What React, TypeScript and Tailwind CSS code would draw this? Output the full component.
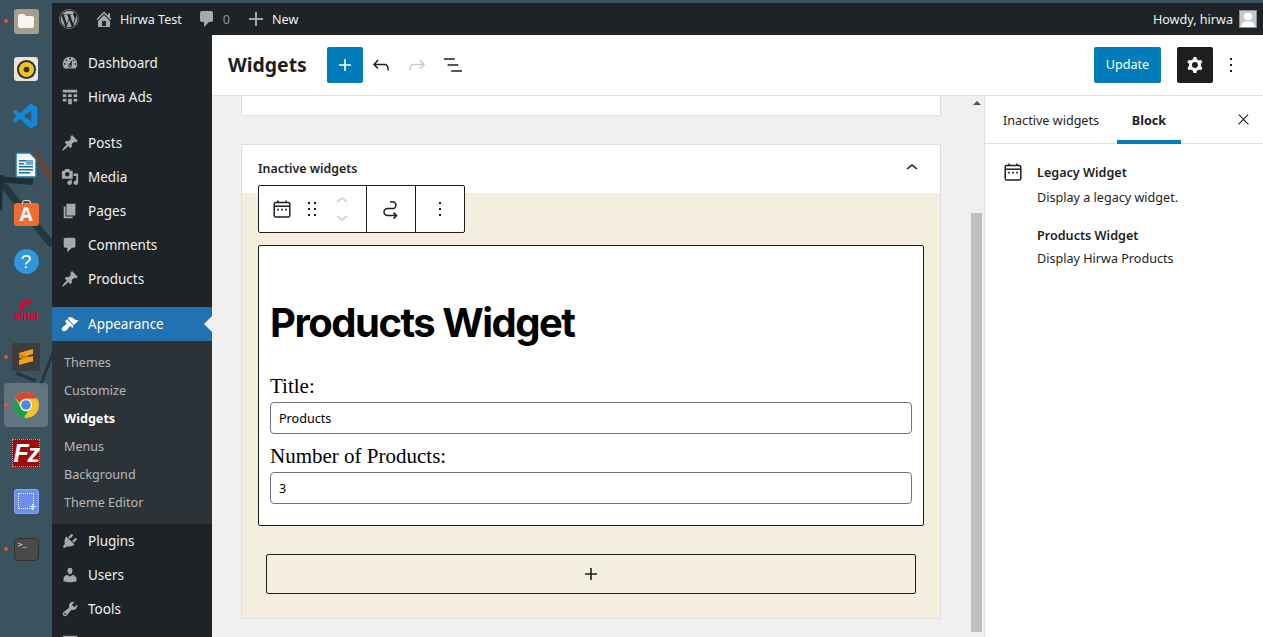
import { FaWordpress } from "react-icons/fa";
import { VscVscode } from "react-icons/vsc";

const D = {
  dashboard:
    "M3.76 16h12.48c1.1-1.37 1.76-3.11 1.76-5 0-4.42-3.58-8-8-8s-8 3.58-8 8c0 1.89.66 3.63 1.76 5zM10 4c.55 0 1 .45 1 1s-.45 1-1 1-1-.45-1-1 .45-1 1-1zM6 6c.55 0 1 .45 1 1s-.45 1-1 1-1-.45-1-1 .45-1 1-1zm8 0c.55 0 1 .45 1 1s-.45 1-1 1-1-.45-1-1 .45-1 1-1zm-5.37 5.55L12 7v6c0 1.1-.9 2-2 2s-2-.9-2-2c0-.57.24-1.08.63-1.45zM4 10c.55 0 1 .45 1 1s-.45 1-1 1-1-.45-1-1 .45-1 1-1zm12 0c.55 0 1 .45 1 1s-.45 1-1 1-1-.45-1-1 .45-1 1-1zm-5 3c0-.55-.45-1-1-1s-1 .45-1 1 .45 1 1 1 1-.45 1-1z",
  table: "M2 2h16v3H2zM2 7h4v3H2zM8 7h4v3H8zM14 7h4v3h-4zM2 12h4v3H2zM8 12h4v6H8zM14 12h4v3h-4z",
  pin: "M10.44 3.02l1.82-1.82 6.36 6.35-1.83 1.82c-1.05-.68-2.48-.57-3.41.36l-.75.75c-.92.93-1.04 2.35-.35 3.41l-1.83 1.82-2.41-2.41-2.8 2.79c-.42.42-3.38 2.71-3.8 2.29s1.86-3.39 2.28-3.81l2.79-2.79L4.1 9.36l1.83-1.82c1.05.69 2.48.57 3.4-.36l.75-.75c.93-.92 1.05-2.35.36-3.41z",
  media:
    "M13 11V4c0-.55-.45-1-1-1h-1.67L9 1H5L3.67 3H2c-.55 0-1 .45-1 1v7c0 .55.45 1 1 1h10c.55 0 1-.45 1-1zM7 4.5c1.38 0 2.5 1.12 2.5 2.5S8.38 9.5 7 9.5 4.5 8.38 4.5 7 5.62 4.5 7 4.5zM14 6h5v10.5c0 1.38-1.12 2.5-2.5 2.5S14 17.88 14 16.5s1.12-2.5 2.5-2.5c.17 0 .34.02.5.05V9h-3V6zm-4 8.05V13h2v3.5c0 1.38-1.12 2.5-2.5 2.5S7 17.88 7 16.5 8.12 14 9.5 14c.17 0 .34.02.5.05z",
  page: "M6 15V2h10v13H6zm-1 1h8v2H3V5h2v11z",
  comment: "M5 2h9c1.1 0 2 .9 2 2v7c0 1.1-.9 2-2 2h-2l-5 5v-5H5c-1.1 0-2-.9-2-2V4c0-1.1.9-2 2-2z",
  brush:
    "M14.48 11.06L7.41 3.99l1.5-1.5c.5-.56 2.3-.47 3.51.32 1.21.8 1.43 1.28 2.91 2.1 1.18.64 2.45 1.26 4.45.85zm-.71.71L6.7 4.7 4.93 6.47c-.39.39-.39 1.02 0 1.41l1.06 1.06c.39.39.39 1.03 0 1.42-.6.6-1.43 1.11-2.21 1.69-.35.26-.7.53-1.01.84C1.43 13.23.1 15.8 1.6 17.3s4.07.17 5.4-1.17c.31-.31.58-.66.84-1.01.58-.78 1.09-1.61 1.69-2.21.39-.39 1.03-.39 1.42 0l1.06 1.06c.39.39 1.02.39 1.41 0z",
  plugin:
    "M13.11 4.36L9.87 7.6 8 5.73l3.24-3.24c.35-.34 1.05-.2 1.56.32.52.51.66 1.21.31 1.55zm-8 1.77l.91-1.12 9.01 9.01-1.19.84c-.71.71-2.63 1.16-3.82 1.16H6.14L4.9 17.26c-.59.59-1.54.59-2.12 0-.59-.58-.59-1.53 0-2.12l1.24-1.24v-3.88c0-1.13.4-3.19 1.09-3.89zm7.26 3.97l3.24-3.24c.34-.35 1.04-.21 1.55.31.52.51.66 1.21.31 1.55l-3.24 3.25z",
  users:
    "M10 9.25c-2.27 0-2.73-3.44-2.73-3.44C7 4.02 7.82 2 9.97 2c2.16 0 2.98 2.02 2.71 3.81 0 0-.41 3.44-2.68 3.44zm0 2.57L12.72 10c2.39 0 4.52 2.33 4.52 4.53v2.49s-3.65 1.13-7.24 1.13c-3.65 0-7.24-1.13-7.24-1.13v-2.49c0-2.25 1.94-4.48 4.47-4.48z",
  tools:
    "M16.68 9.77c-1.34 1.34-3.3 1.67-4.95.99l-5.41 6.52c-.99.99-2.59.99-3.58 0s-.99-2.59 0-3.57l6.52-5.42c-.68-1.65-.35-3.61.99-4.95 1.28-1.28 3.12-1.62 4.72-1.06l-2.89 2.89 2.82 2.82 2.86-2.87c.53 1.58.18 3.39-1.08 4.67zM3.81 16.21c.4.39 1.04.39 1.43 0 .4-.4.4-1.04 0-1.43-.39-.4-1.03-.4-1.43 0-.39.39-.39 1.03 0 1.43z",
  home: "M16 8.5l1.53 1.53-1.06 1.06L10 4.62l-6.47 6.47-1.06-1.06L10 2.5l4 4v-2h2v4zm-6-2.46l6 5.99V18H4v-5.97zM12 17v-5H8v5h4z",
  plusBar: "M17 9v2h-6v6H9v-6H3V9h6V3h2v6h6z",
  settings: "M2 2h16v16H2z",
};

const G = {
  plus: "M18 11.2h-5.2V6h-1.6v5.2H6v1.6h5.2V18h1.6v-5.2H18z",
  undo: "M18.3 11.7c-.6-.6-1.4-.9-2.3-.9H6.7l2.9-3.3-1.1-1-4.5 5L8.5 16l1-1-2.7-2.7H16c.5 0 .9.2 1.3.5 1 1 1 3.4 1 4.5v.3h1.5v-.2c0-1.5 0-4.3-1.5-5.7z",
  redo: "M15.6 6.5l-1.1 1 2.9 3.3H8c-.9 0-1.7.3-2.3.9-1.4 1.5-1.4 4.2-1.4 5.6v.2h1.5v-.3c0-1.1 0-3.5 1-4.5.3-.3.7-.5 1.3-.5h9.2L14.5 15l1.1 1.1 4.6-4.6-4.6-5z",
  list: "M13.8 5.2H3v1.5h10.8V5.2zm-3.6 12v1.5H21v-1.5H10.2zm7.2-6H6.6v1.5h10.8v-1.5z",
  cog: "M10.289 4.836A1 1 0 0111.275 4h1.306a1 1 0 01.987.836l.244 1.466c.787.26 1.503.679 2.108 1.218l1.393-.522a1 1 0 011.216.437l.653 1.13a1 1 0 01-.23 1.273l-1.148.944a6.025 6.025 0 010 2.435l1.149.946a1 1 0 01.23 1.272l-.653 1.13a1 1 0 01-1.216.437l-1.394-.522c-.605.54-1.32.958-2.108 1.218l-.244 1.466a1 1 0 01-.987.836h-1.306a1 1 0 01-.986-.836l-.244-1.466a5.995 5.995 0 01-2.108-1.218l-1.394.522a1 1 0 01-1.217-.436l-.653-1.131a1 1 0 01.23-1.272l1.149-.946a6.026 6.026 0 010-2.435l-1.148-.944a1 1 0 01-.23-1.272l.653-1.131a1 1 0 011.217-.437l1.393.522a5.994 5.994 0 012.108-1.218l.244-1.466zM14.929 12a3 3 0 11-6 0 3 3 0 016 0z",
  more: "M13 19h-2v-2h2v2zm0-6h-2v-2h2v2zm0-6h-2V5h2v2z",
  drag: "M8 7h2V5H8v2zm0 6h2v-2H8v2zm0 6h2v-2H8v2zm6-14v2h2V5h-2zm0 8h2v-2h-2v2zm0 6h2v-2h-2v2z",
  up: "M6.5 12.4L12 8l5.5 4.4-.9 1.2L12 10l-4.5 3.6-1-1.2z",
  down: "M17.5 11.6L12 16l-5.5-4.4.9-1.2L12 14l4.5-3.6 1 1.2z",
  close: "M13 11.8l6.1-6.3-1-1-6.1 6.2-6.1-6.2-1 1 6.1 6.3-6.5 6.7 1 1 6.5-6.6 6.5 6.6 1-1z",
};

const Dash = ({ d, className }: { d: string; className?: string }) => (
  <svg viewBox="0 0 20 20" className={className} fill="currentColor">
    <path d={d} />
  </svg>
);

const Gb = ({ d, className }: { d: string; className?: string }) => (
  <svg viewBox="0 0 24 24" className={className} fill="currentColor">
    <path d={d} fillRule="evenodd" />
  </svg>
);

const CalendarIcon = ({ className }: { className?: string }) => (
  <svg viewBox="0 0 18 18" className={className} fill="none" stroke="#1e1e1e" strokeWidth="1.5">
    <rect x="1.2" y="2.6" width="15.6" height="14.4" rx="1.6" />
    <path d="M1.2 6.2h15.6" />
    <path d="M5 .6v2.4M13 .6v2.4" />
    <path d="M4.2 9.6h1.7M8.2 9.6h1.7M12.2 9.6h1.7" strokeWidth="1.6" />
  </svg>
);

const menuTop = [
  { label: "Dashboard", icon: D.dashboard },
  { label: "Hirwa Ads", icon: D.table },
];
const menuMid = [
  { label: "Posts", icon: D.pin },
  { label: "Media", icon: D.media },
  { label: "Pages", icon: D.page },
  { label: "Comments", icon: D.comment },
  { label: "Products", icon: D.pin },
];
const menuBottom = [
  { label: "Plugins", icon: D.plugin },
  { label: "Users", icon: D.users },
  { label: "Tools", icon: D.tools },
];
const subMenu = ["Themes", "Customize", "Widgets", "Menus", "Background", "Theme Editor"];

const MenuItem = ({ label, icon }: { label: string; icon: string }) => (
  <div className="flex h-[34px] shrink-0 items-center text-[13.5px] text-[#f0f0f1]">
    <Dash d={icon} className="mx-[9px] size-[18px] text-[#a7aaad]" />
    <span>{label}</span>
  </div>
);

const Sidebar = () => (
  <nav className="flex w-[160px] shrink-0 flex-col overflow-hidden bg-[#1d2327] pt-[11px]">
    {menuTop.map((m) => (
      <MenuItem key={m.label} {...m} />
    ))}
    <div className="h-[12px] shrink-0" />
    {menuMid.map((m) => (
      <MenuItem key={m.label} {...m} />
    ))}
    <div className="h-[11px] shrink-0" />
    <div className="relative flex h-[34px] shrink-0 items-center bg-[#2271b1] text-[13.5px] text-white">
      <Dash d={D.brush} className="mx-[9px] size-[18px] text-white" />
      <span>Appearance</span>
      <span className="absolute right-0 top-[9px] size-0 border-y-[8px] border-r-[8px] border-y-transparent border-r-[#f0f0f0]" />
    </div>
    <div className="shrink-0 bg-[#2c3338] pb-[7px] pt-[8px]">
      {subMenu.map((s) => (
        <div
          key={s}
          className={
            s === "Widgets"
              ? "flex h-[28px] items-center pl-[12px] text-[12.6px] font-bold text-white"
              : "flex h-[28px] items-center pl-[12px] text-[12.6px] text-[#f0f0f1]/70"
          }
        >
          {s}
        </div>
      ))}
    </div>
    {menuBottom.map((m) => (
      <MenuItem key={m.label} {...m} />
    ))}
    <Dash d={D.settings} className="ml-[9px] mt-[8px] size-[18px] shrink-0 text-[#a7aaad]" />
  </nav>
);

const AdminBar = () => (
  <header className="flex h-[32px] shrink-0 items-center bg-[#1d2327] text-[12.6px] text-[#f0f0f1]">
    <FaWordpress className="ml-[7px] size-[20px] text-[#a7aaad]" />
    <Dash d={D.home} className="ml-[15px] size-[20px] text-[#a7aaad]" />
    <span className="ml-[6px] pt-[2px]">Hirwa Test</span>
    <Dash d={D.comment} className="ml-[15px] size-[20px] text-[#a7aaad]" />
    <span className="ml-[6px] pt-[2px] text-[#8c8f94]">0</span>
    <Dash d={D.plusBar} className="ml-[16px] size-[20px] text-[#a7aaad]" />
    <span className="ml-[6px] pt-[2px]">New</span>
    <span className="ml-auto pt-[2px]">Howdy, hirwa</span>
    <div className="mx-[6px] flex size-[18px] flex-col items-center overflow-hidden border border-[#8c8f94] bg-[#c9c9c9]">
      <span className="mt-[2px] size-[8px] rounded-full bg-white" />
      <span className="mt-[1px] h-[8px] w-[14px] rounded-t-full bg-white" />
    </div>
  </header>
);

const EditorHeader = () => (
  <div className="flex h-[61px] shrink-0 items-center border-b border-[#e0e0e0] bg-white pb-[1px] text-[#1e1e1e]">
    <h1 className="ml-[16px] w-[99px] text-[19.4px] font-bold leading-none">Widgets</h1>
    <button className="flex size-[36px] items-center justify-center rounded-[2px] bg-[#007cba] text-white">
      <Gb d={G.plus} className="size-6" />
    </button>
    <Gb d={G.undo} className="ml-[6px] size-6" />
    <Gb d={G.redo} className="ml-[12px] size-6 text-[#cccccc]" />
    <Gb d={G.list} className="ml-[12px] size-6" />
    <button className="ml-auto flex h-[36px] w-[67px] items-center justify-center rounded-[2px] bg-[#007cba] pt-[2px] text-[12.6px] text-white">
      Update
    </button>
    <button className="ml-[16px] flex size-[36px] items-center justify-center rounded-[2px] bg-[#1e1e1e] text-white">
      <Gb d={G.cog} className="size-6" />
    </button>
    <Gb d={G.more} className="ml-[6px] mr-[20px] size-6" />
  </div>
);

const Field = ({ label, value }: { label: string; value: string }) => (
  <div className="flex flex-col">
    <label className="font-['Liberation_Serif',serif] text-[21px] leading-[24px] text-black">{label}</label>
    <div className="mt-[4px] flex h-[32px] items-center rounded-[4px] border border-[#757575] bg-white pl-[8px] pt-[2px] text-[12.6px] text-black">
      {value}
    </div>
  </div>
);

const Toolbar = () => (
  <div className="absolute left-[16px] top-[40px] flex h-[48px] w-[207px] items-center rounded-[2px] border border-[#1e1e1e] bg-white text-[#1e1e1e]">
    <div className="flex h-full w-[108px] items-center border-r border-[#1e1e1e] pl-[14px]">
      <CalendarIcon className="size-[18px]" />
      <Gb d={G.drag} className="ml-[9px] size-6" />
      <div className="ml-[6px] -mt-[1px] flex flex-col text-[#cccccc]">
        <Gb d={G.up} className="-mb-[8px] size-6" />
        <Gb d={G.down} className="size-6" />
      </div>
    </div>
    <div className="flex h-full w-[49px] items-center justify-center border-r border-[#1e1e1e]">
      <svg viewBox="0 0 24 24" className="size-6" fill="none" stroke="#1e1e1e" strokeWidth="1.5">
        <path d="M11 4.800h2.500a3.400 3.400 0 0 1 0 6.800H8.500a3.500 3.500 0 0 0 0 7h9" />
        <path d="M14.500 15.600l3 3-3 3" />
      </svg>
    </div>
    <div className="flex h-full flex-1 items-center justify-center">
      <Gb d={G.more} className="size-6" />
    </div>
  </div>
);

const Canvas = () => (
  <div className="min-w-0 flex-1 overflow-hidden bg-[#f0f0f0] pl-[29px]">
    <div className="h-[20px] w-[700px] border-x border-b border-[#e0e0e0] bg-white" />
    <section className="relative mt-[28px] w-[700px] border border-[#e0e0e0] bg-white">
      <div className="flex h-[48px] items-center justify-between px-[16px] text-[12.4px] font-semibold text-[#1e1e1e]">
        <span>Inactive widgets</span>
        <Gb d={G.up} className="-mt-[2px] size-6" />
      </div>
      <div className="bg-[#f4eedf] pb-[24px] pl-[16px] pr-[16px] pt-[52px]">
        <div className="flex h-[281px] flex-col rounded-[2px] border border-[#1e1e1e] bg-white px-[11px]">
          <h2 className="mt-[52px] font-['Inter',sans-serif] text-[40px] font-bold leading-[50px] tracking-[-1.5px] text-black">
            Products Widget
          </h2>
          <div className="mt-[26px] flex flex-col gap-[10px]">
            <Field label="Title:" value="Products" />
            <Field label="Number of Products:" value="3" />
          </div>
        </div>
        <button className="ml-[8px] mt-[28px] flex h-[40px] w-[650px] items-center justify-center rounded-[2px] border border-[#1e1e1e] text-[#1e1e1e]">
          <Gb d={G.plus} className="size-6" />
        </button>
      </div>
      <Toolbar />
    </section>
  </div>
);

const Scrollbar = () => (
  <div className="flex w-[13px] shrink-0 flex-col bg-[#f0f0f0]">
    <span className="ml-[2px] mt-[5px] size-0 border-x-[4px] border-b-[4px] border-x-transparent border-b-[#505050]" />
    <div className="mt-[108px] h-[419px] w-[11px] bg-[#c0c0c0]" />
  </div>
);

const Inspector = () => (
  <aside className="w-[279px] shrink-0 border-l border-[#e0e0e0] bg-white text-[12.6px] text-[#1e1e1e]">
    <div className="flex h-[48px] border-b border-[#e0e0e0]">
      <div className="flex w-[132px] items-center pl-[18px] pt-[3px]">Inactive widgets</div>
      <div className="-mb-[1px] flex w-[64px] items-center justify-center border-b-4 border-[#007cba] pt-[6px] font-bold">
        Block
      </div>
      <Gb d={G.close} className="ml-[54px] mt-[15px] size-[17px]" />
    </div>
    <div className="flex pl-[19px] pt-[20px]">
      <CalendarIcon className="-mt-[1px] size-[18px]" />
      <div className="ml-[15px] flex flex-col">
        <strong className="font-semibold leading-[18px]">Legacy Widget</strong>
        <p className="mt-[7px] leading-[18px]">Display a legacy widget.</p>
        <strong className="mt-[20px] font-semibold leading-[18px]">Products Widget</strong>
        <p className="mt-[5px] leading-[18px]">Display Hirwa Products</p>
      </div>
    </div>
  </aside>
);

const DockIcon = ({ children, dot, active }: { children: React.ReactNode; dot?: boolean; active?: boolean }) => (
  <div className="relative flex h-[48px] w-[52px] shrink-0 items-center justify-center">
    {active && <span className="absolute left-[4px] top-[2px] size-[44px] rounded-[4px] bg-white/20" />}
    {dot && <span className="absolute left-[4px] top-[22px] size-[4px] rounded-full bg-[#e95420]" />}
    <div className="relative flex size-[26px] items-center justify-center">{children}</div>
  </div>
);

const Dock = () => (
  <div className="relative flex h-full w-[52px] shrink-0 flex-col overflow-hidden bg-[#3b525f]">
    <svg viewBox="0 0 52 637" className="absolute left-0 top-0 h-[637px] w-[52px]" fill="none">
      <path d="M-4 176 52 245" stroke="#243640" strokeWidth="7" />
      <path d="M-4 179 33 182" stroke="#1f2f38" strokeWidth="6" />
      <path d="M1 175 0 210" stroke="#1f2f38" strokeWidth="4" />
      <path d="M34 152 54 182" stroke="#6a4430" strokeWidth="5" />
      <path d="M16 373 36 381" stroke="#243640" strokeWidth="3" />
      <path d="M41 384 54 350" stroke="#243640" strokeWidth="3" />
    </svg>
    <div className="relative -mt-[3px] flex flex-col">
      <DockIcon dot>
        <div className="flex size-[25px] shrink-0 items-center justify-center rounded-[3px] bg-[#a59e8d]">
          <svg viewBox="0 0 18 16" className="w-[18px]">
            <path d="M1 3a2 2 0 0 1 2-2h4l2 2h6a2 2 0 0 1 2 2v8a2 2 0 0 1-2 2H3a2 2 0 0 1-2-2z" fill="#f7f5f0" />
          </svg>
        </div>
      </DockIcon>
      <DockIcon>
        <div className="flex size-[24px] shrink-0 items-center justify-center rounded-[3px] bg-[#e8e4da]">
          <svg viewBox="0 0 20 20" className="size-[19px]">
            <circle cx="10" cy="10" r="10" fill="#2a2a2a" />
            <circle cx="10" cy="10" r="8" fill="#f0c419" />
            <circle cx="10" cy="10" r="3" fill="#333333" />
          </svg>
        </div>
      </DockIcon>
      <DockIcon>
        <VscVscode className="size-[30px] shrink-0 text-[#1187d8]" />
      </DockIcon>
      <DockIcon>
        <svg viewBox="0 0 22 26" className="h-[26px] w-[22px]">
          <path d="M1 2a1 1 0 0 1 1-1h13l6 6v17a1 1 0 0 1-1 1H2a1 1 0 0 1-1-1z" fill="#f4f8fb" stroke="#1b79a8" strokeWidth="1.5" />
          <path d="M4 8h8v1.5H4zM4 11h5v1.5H4zM4 14h14v1.5H4zM4 17h14v1.5H4zM4 20h11v1.5H4z" fill="#1b6f9e" />
          <rect x="11" y="8" width="7" height="5" fill="#6aa9cf" />
        </svg>
      </DockIcon>
      <DockIcon>
        <div className="relative mt-[2px] flex h-[23px] w-[25px] shrink-0 items-center justify-center rounded-[3px] bg-[#ee6b33] text-[19px] font-bold leading-none text-white">
          <span className="absolute -top-[3px] left-[8px] h-[4px] w-[9px] rounded-t-[3px] border border-b-0 border-[#e8d5c0]" />
          A
        </div>
      </DockIcon>
      <DockIcon>
        <div className="flex size-[25px] shrink-0 items-center justify-center rounded-full bg-[#2f95dc] font-['Liberation_Sans',sans-serif] text-[19px] leading-none text-white">
          ?
        </div>
      </DockIcon>
      <DockIcon>
        <div className="flex flex-col items-center">
          <svg viewBox="0 0 20 16" className="h-[15px] w-[16px] shrink-0">
            <path d="M3 15C1 11 4 4 10 2c4-1.500 8 0 7 3-1 3-5 4-8 4 3-1 5-2 5-4-3 0-7 3-7 7 0 2-2 4-4 3z" fill="#e4002b" />
          </svg>
          <span className="font-['Liberation_Sans',sans-serif] text-[10px] font-bold leading-[9px] text-[#e4002b]">airtel</span>
        </div>
      </DockIcon>
      <DockIcon dot>
        <div className="flex size-[28px] shrink-0 items-center justify-center rounded-[2px] bg-[#3d3d3d]">
          <svg viewBox="0 0 20 20" className="size-[20px]">
            <path d="M3 6 17 2v5L3 11z" fill="#f9a11b" />
            <path d="M3 6.500 17 11v4L3 11z" fill="#d9830f" />
            <path d="M3 13 17 9v5L3 18z" fill="#f9a11b" />
          </svg>
        </div>
      </DockIcon>
      <DockIcon dot active>
        <svg viewBox="0 0 26 26" className="size-[26px]">
          <circle cx="13" cy="13" r="13" fill="#f2c230" />
          <path d="M13 0a13 13 0 0 1 11.300 6.500H13a6.500 6.500 0 0 0-6.200 4.500L2.100 5.700A13 13 0 0 1 13 0z" fill="#dc4437" />
          <path d="M2.100 5.700l5 8.800a6.500 6.500 0 0 0 7.700 4.700L11 26A13 13 0 0 1 2.100 5.700z" fill="#1f9d55" />
          <circle cx="13" cy="13" r="6" fill="#ffffff" />
          <circle cx="13" cy="13" r="4.800" fill="#4b89e8" />
        </svg>
      </DockIcon>
      <DockIcon>
        <div className="flex size-[28px] shrink-0 items-center justify-center border border-dotted border-[#d88] bg-[#a00a0a] font-['Liberation_Sans',sans-serif] text-[25px] font-bold italic leading-none tracking-[-1.5px] text-white">
          Fz
        </div>
      </DockIcon>
      <DockIcon>
        <div className="relative size-[25px] shrink-0 rounded-[3px] border border-[#8aa6f5] bg-[#6d8ff0]">
          <span className="absolute left-[3px] top-[3px] size-[16px] border border-dotted border-white/90" />
          <span className="absolute bottom-[1px] right-[1px] text-[13px] leading-[11px] text-white">+</span>
        </div>
      </DockIcon>
      <DockIcon dot>
        <div className="relative h-[23px] w-[25px] shrink-0 rounded-[4px] border border-[#333333] bg-[#4a4a4a]">
          <span className="absolute left-[3px] top-[1px] font-['Liberation_Mono',monospace] text-[8px] leading-[9px] text-white">&gt;_</span>
        </div>
      </DockIcon>
    </div>
  </div>
);

export default function App() {
  return (
    <div className="flex h-[637px] w-[1263px] overflow-hidden bg-[#3b525f] font-['Noto_Sans',sans-serif]">
      <Dock />
      <div className="flex min-w-0 flex-1 flex-col pt-[3px]">
        <AdminBar />
        <div className="flex min-h-0 flex-1">
          <Sidebar />
          <main className="flex min-w-0 flex-1 flex-col">
            <EditorHeader />
            <div className="flex min-h-0 flex-1">
              <Canvas />
              <Scrollbar />
              <Inspector />
            </div>
          </main>
        </div>
      </div>
    </div>
  );
}
